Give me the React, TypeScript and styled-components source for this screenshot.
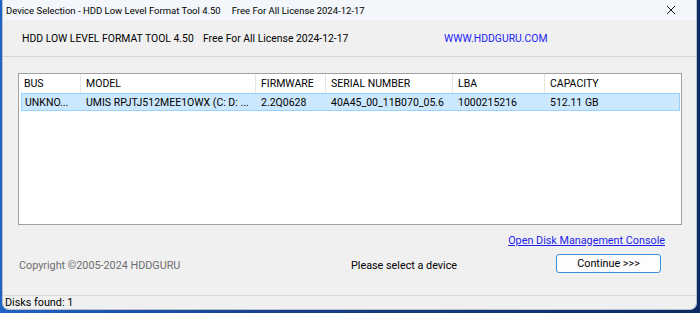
import React from "react";
import styled, { createGlobalStyle } from "styled-components";

const Global = createGlobalStyle`
  html, body { margin: 0; padding: 0; width: 700px; height: 313px; overflow: hidden; }
  body { font-family: Roboto, "Noto Sans", sans-serif; }
`;

const Desktop = styled.div`
  width: 700px;
  height: 313px;
  box-sizing: border-box;
  padding: 0 3px 3px 2px;
  background: linear-gradient(90deg, #1f63c4 0%, #173f8c 40%, #0c2a63 100%);
  display: flex;
`;

const Window = styled.div`
  flex: 1;
  display: flex;
  flex-direction: column;
  background: #f0f0f0;
  border: 1px solid #b9c2cc;
  border-top: none;
  border-radius: 0 0 7px 7px;
  overflow: hidden;
  font-size: 10.8px;
  color: #000;
`;

const TitleBar = styled.div`
  height: 20px;
  display: flex;
  align-items: center;
  padding: 0 20px 0 3px;
  background: #f3f6fa;
  font-size: 9.5px;
  white-space: nowrap;
`;

const TitlePart = styled.span<{ $gap?: number }>`
  margin-left: ${(p) => p.$gap ?? 0}px;
`;

const CloseBox = styled.span`
  margin-left: auto;
  display: flex;
`;

const Header = styled.div`
  height: 36px;
  display: grid;
  grid-template-columns: 181px 241px auto;
  align-items: center;
  padding-left: 19px;
  border-bottom: 1px solid #d6d6d6;
  font-size: 10.4px;
  white-space: nowrap;
`;

const SiteLink = styled.span`
  color: #2323f5;
`;

const Content = styled.div`
  flex: 1;
  display: flex;
  flex-direction: column;
  padding: 16px 14px 0 15px;
`;

const List = styled.div`
  height: 152px;
  box-sizing: border-box;
  border: 1px solid #a0a0a0;
  background: #fff;
  display: flex;
  flex-direction: column;
  font-size: 10.5px;
`;

const HeadRow = styled.div`
  display: grid;
  grid-template-columns: 62px 175px 70px 127px 92px 1fr;
  height: 19px;
`;

const HeadCell = styled.div<{ $last?: boolean }>`
  display: flex;
  align-items: center;
  padding-left: 5px;
  border-right: ${(p) => (p.$last ? "none" : "1px solid #e5e5e5")};
  white-space: nowrap;
`;

const DataRow = styled.div<{ $selected?: boolean }>`
  display: grid;
  grid-template-columns: 59px 175px 70px 127px 92px 1fr;
  height: 18px;
  box-sizing: border-box;
  margin: 0 1px 0 2px;
  background: ${(p) => (p.$selected ? "#cce8ff" : "transparent")};
  border: 1px solid ${(p) => (p.$selected ? "#99d1ff" : "transparent")};
`;

const Cell = styled.div<{ $pad: number }>`
  display: flex;
  align-items: center;
  padding-left: ${(p) => p.$pad}px;
  white-space: nowrap;
  overflow: hidden;
`;

const LinkRow = styled.div`
  display: flex;
  justify-content: flex-end;
  padding: 8px 17px 0 0;
  height: 14px;
  align-items: center;
`;

const DiskLink = styled.a`
  color: #1d1df0;
  text-decoration: underline;
  cursor: pointer;
`;

const ActionRow = styled.div`
  display: grid;
  grid-template-columns: 332px 205px 105px;
  align-items: start;
  margin-top: 7px;
  padding-left: 1px;
`;

const RowText = styled.span<{ $muted?: boolean }>`
  margin-top: 5px;
  color: ${(p) => (p.$muted ? "#6e6e6e" : "#000")};
`;

const Button = styled.button`
  height: 19px;
  width: 105px;
  box-sizing: border-box;
  border: 1.5px solid #3d8fd6;
  border-radius: 3px;
  background: #fdfdfd;
  font-family: inherit;
  font-size: 10.8px;
  color: #000;
  padding: 0;
  display: flex;
  align-items: center;
  justify-content: center;
`;

const StatusBar = styled.div`
  margin-top: auto;
  height: 13px;
  border-top: 1px solid #d9d9d9;
  display: flex;
  align-items: center;
  padding-left: 2px;
`;

const CloseIcon = () => (
  <svg width="10" height="10" viewBox="0 0 10 10">
    <path d="M1 1 L9 9 M9 1 L1 9" stroke="#1a1a1a" strokeWidth="1" />
  </svg>
);

const headers = ["BUS", "MODEL", "FIRMWARE", "SERIAL NUMBER", "LBA", "CAPACITY"];
const row = ["UNKNO...", "UMIS RPJTJ512MEE1OWX (C: D: ...", "2.2Q0628", "40A45_00_11B070_05.6", "1000215216", "512.11 GB"];
const pads = [3, 5, 5, 5, 5, 5];

export default function App() {
  return (
    <>
      <Global />
      <Desktop>
        <Window>
          <TitleBar>
            <TitlePart>Device Selection - HDD Low Level Format Tool 4.50</TitlePart>
            <TitlePart $gap={11}>Free For All License 2024-12-17</TitlePart>
            <CloseBox>
              <CloseIcon />
            </CloseBox>
          </TitleBar>
          <Header>
            <span>HDD LOW LEVEL FORMAT TOOL 4.50</span>
            <span>Free For All License 2024-12-17</span>
            <SiteLink>WWW.HDDGURU.COM</SiteLink>
          </Header>
          <Content>
            <List>
              <HeadRow>
                {headers.map((h, i) => (
                  <HeadCell key={h} $last={i === headers.length - 1}>{h}</HeadCell>
                ))}
              </HeadRow>
              <DataRow $selected>
                {row.map((c, i) => (
                  <Cell key={i} $pad={pads[i]}>{c}</Cell>
                ))}
              </DataRow>
            </List>
            <LinkRow>
              <DiskLink>Open Disk Management Console</DiskLink>
            </LinkRow>
            <ActionRow>
              <RowText $muted>Copyright ©2005-2024 HDDGURU</RowText>
              <RowText>Please select a device</RowText>
              <Button>Continue &gt;&gt;&gt;</Button>
            </ActionRow>
          </Content>
          <StatusBar>Disks found: 1</StatusBar>
        </Window>
      </Desktop>
    </>
  );
}
